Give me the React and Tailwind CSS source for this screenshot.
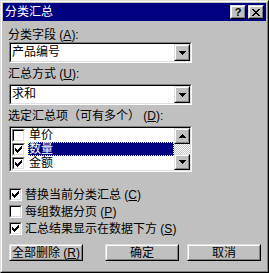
import React from 'react';

const font = { fontFamily: '"Liberation Sans", "Noto Sans CJK SC", sans-serif' };

// raised 3d bevel used by buttons
const Raised = ({ className = '', children }) => (
    <div className={`border border-t-[#dfdfdf] border-l-[#dfdfdf] border-r-black border-b-black ${className}`}>
        <div className="w-full h-full border border-t-white border-l-white border-r-[#808080] border-b-[#808080] bg-[#c0c0c0] flex items-center justify-center">
            {children}
        </div>
    </div>
);

// sunken field bevel
const Sunken = ({ className = '', children }) => (
    <div className={`border border-t-[#808080] border-l-[#808080] border-r-white border-b-white ${className}`}>
        <div className="w-full h-full border border-t-black border-l-black border-r-[#dfdfdf] border-b-[#dfdfdf] bg-white flex">
            {children}
        </div>
    </div>
);

const Arrow = ({ up }) => (
    <svg width="7" height="4" viewBox="0 0 7 4" shapeRendering="crispEdges">
        {up
            ? <path d="M3 0h1v1h1v1h1v1h1v1H0V3h1V2h1V1h1z" fill="#000" />
            : <path d="M0 0h7v1H6v1H5v1H4v1H3V3H2V2H1V1H0z" fill="#000" />}
    </svg>
);

const Check = () => (
    <svg width="7" height="7" viewBox="0 0 7 7" shapeRendering="crispEdges">
        <path d="M6 0h1v3H6v1H5v1H4v1H3v1H2V6H1V5H0V2h1v1h1v1h1V3h1V2h1V1h1z" fill="#000" />
    </svg>
);

const CheckBox = ({ checked }) => (
    <Sunken className="w-[13px] h-[13px] shrink-0">
        <div className="w-full h-full flex items-center justify-center">{checked && <Check />}</div>
    </Sunken>
);

const Combo = ({ value }) => (
    <Sunken className="ml-[6px] w-[183px] h-[21px]">
        <span className="flex-1 pl-[1px] text-[12px] leading-[17px] text-black">{value}</span>
        <Raised className="w-[16px] h-[17px]"><Arrow /></Raised>
    </Sunken>
);

const Label = ({ text, k, mt }) => (
    <div className={`pl-[5px] text-[12px] leading-[12px] text-black ${mt}`}>
        {text} (<u>{k}</u>):
    </div>
);

const listItems = [
    { name: '单价', checked: false },
    { name: '数量', checked: true, selected: true },
    { name: '金额', checked: true },
];

const options = [
    { name: '替换当前分类汇总', k: 'C', checked: true },
    { name: '每组数据分页', k: 'P', checked: false },
    { name: '汇总结果显示在数据下方', k: 'S', checked: true },
];

export default function App() {
    return (
        <div className="w-[269px] h-[273px] bg-[#c0c0c0] select-none" style={font}>
            <div className="w-full h-full border border-t-[#dfdfdf] border-l-[#dfdfdf] border-r-black border-b-black">
                <div className="w-full h-full border border-t-white border-l-white border-r-[#808080] border-b-[#808080] p-px flex flex-col">
                    {/* Title bar */}
                    <div className="h-[18px] bg-[#000080] flex items-center pl-[2px] pr-[2px]">
                        <span className="flex-1 text-white text-[12px] leading-[12px]">分类汇总</span>
                        <Raised className="w-[16px] h-[14px]">
                            <span className="text-[11px] leading-[10px] font-bold text-black">?</span>
                        </Raised>
                        <Raised className="ml-[2px] w-[16px] h-[14px]">
                            <svg width="8" height="7" viewBox="0 0 8 7" shapeRendering="crispEdges">
                                <path d="M0 0h2v1h1v1h2V1h1V0h2v1H7v1H6v1H5v1h1v1h1v1h1v1H6V6H5V5H3v1H2v1H0V6h1V5h1V4h1V3H2V2H1V1H0z" fill="#000" />
                            </svg>
                        </Raised>
                    </div>

                    <Label text="分类字段" k="A" mt="mt-[8px]" />
                    <div className="mt-[1px]"><Combo value="产品编号" /></div>

                    <Label text="汇总方式" k="U" mt="mt-[5px]" />
                    <div className="mt-[4px]"><Combo value="求和" /></div>

                    <Label text="选定汇总项（可有多个）" k="D" mt="mt-[5px]" />
                    <Sunken className="mt-[4px] ml-[6px] w-[183px] h-[46px]">
                        <div className="flex-1 flex flex-col">
                            {listItems.map(item => (
                                <div key={item.name} className="h-[14px] flex items-center pl-[1px]">
                                    <CheckBox checked={item.checked} />
                                    <span
                                        className={`ml-[3px] flex-1 h-[14px] pl-[1px] text-[12px] leading-[14px] ${item.selected ? 'bg-[#000080] text-white outline-1 outline-dotted outline-offset-[-1px] outline-[#ffff80]' : 'text-black'}`}
                                    >
                                        {item.name}
                                    </span>
                                </div>
                            ))}
                        </div>
                        <div className="w-[16px] flex flex-col">
                            <Raised className="w-[16px] h-[16px]"><Arrow up /></Raised>
                            <div className="flex-1 bg-[repeating-conic-gradient(#c0c0c0_0_25%,#ffffff_0_50%)] bg-[length:2px_2px]" />
                            <Raised className="w-[16px] h-[16px]"><Arrow /></Raised>
                        </div>
                    </Sunken>

                    <div className="mt-[16px] ml-[6px] flex flex-col gap-[4px]">
                        {options.map(o => (
                            <div key={o.name} className="h-[13px] flex items-center">
                                <CheckBox checked={o.checked} />
                                <span className="ml-[3px] text-[12px] leading-[12px] text-black">
                                    {o.name} (<u>{o.k}</u>)
                                </span>
                            </div>
                        ))}
                    </div>

                    <div className="mt-[9px] ml-[6px] flex">
                        <Raised className="w-[74px] h-[17px]">
                            <span className="text-[12px] leading-[12px] text-black">全部删除 (<u>R</u>)</span>
                        </Raised>
                        <Raised className="ml-[22px] w-[74px] h-[17px]">
                            <span className="text-[12px] leading-[12px] text-black">确定</span>
                        </Raised>
                        <Raised className="ml-[8px] w-[74px] h-[17px]">
                            <span className="text-[12px] leading-[12px] text-black">取消</span>
                        </Raised>
                    </div>
                </div>
            </div>
        </div>
    );
}
